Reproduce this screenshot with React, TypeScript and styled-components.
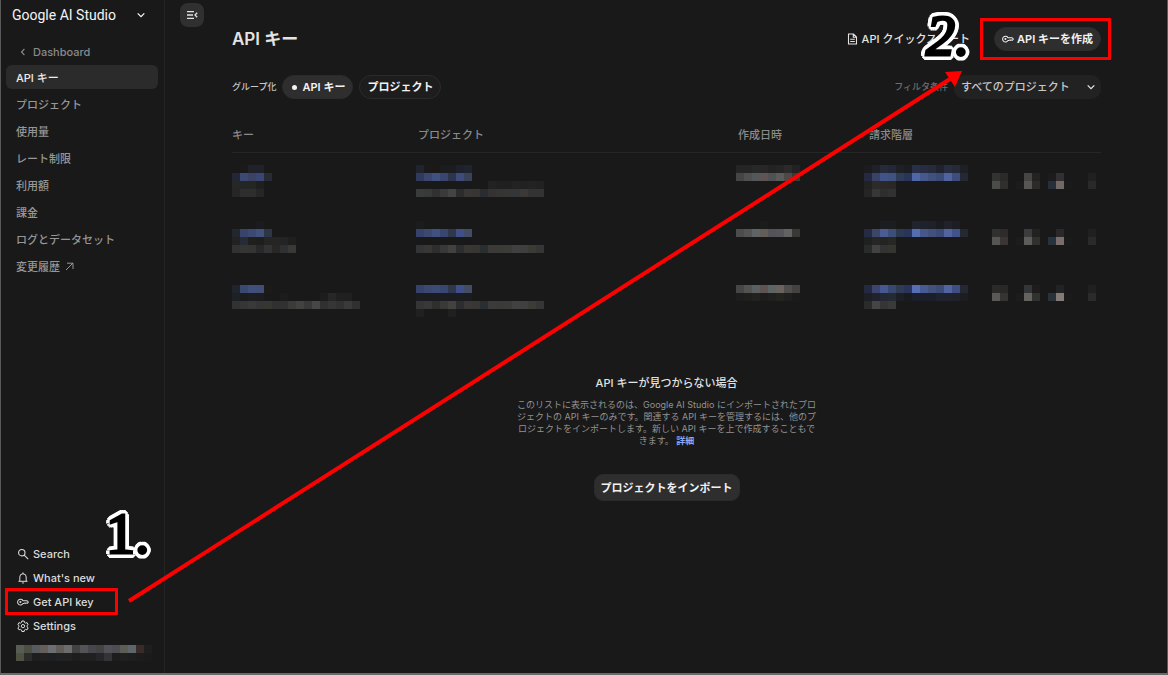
import React from "react";
import styled, { createGlobalStyle } from "styled-components";

const Global = createGlobalStyle`
  * { box-sizing: border-box; }
  body { margin: 0; background: #191919; }
  button, select { font: inherit; color: inherit; }
  a { color: inherit; text-decoration: none; }
`;

const Page = styled.div`
  position: relative;
  display: flex;
  min-height: 100vh;
  background: #191919;
  color: #e3e3e3;
  border-left: 1px solid #5a5a5a;
  border-right: 1px solid #5a5a5a;
  border-bottom: 2px solid #6a6a6a;
  font: 500 11px/16px Inter, "Noto Sans CJK JP", sans-serif;
`;

const Sidebar = styled.aside`
  display: flex;
  flex-direction: column;
  flex: none;
  width: 164px;
  padding: 4px 6px 8px 5px;
  border-right: 1px solid #242424;
`;

const Brand = styled.button`
  display: flex;
  align-items: center;
  justify-content: space-between;
  height: 22px;
  padding: 0 12px 0 6px;
  border: 0;
  background: none;
  color: #f4f4f4;
  font: 400 14px/22px Roboto, sans-serif;
`;

const Back = styled.a`
  display: flex;
  align-items: center;
  gap: 5px;
  height: 24px;
  margin-top: 14px;
  padding-left: 12px;
  color: #8a8a8a;
`;

const NavList = styled.nav`
  display: flex;
  flex-direction: column;
  gap: 3px;
  margin-top: 1px;
`;

const NavItem = styled.a<{ $active?: boolean }>`
  display: flex;
  align-items: center;
  gap: 5px;
  height: 24px;
  padding: 1px 10px 0;
  border-radius: 6px;
  color: ${(p) => (p.$active ? "#ececec" : "#969696")};
  background: ${(p) => (p.$active ? "#2b2b2b" : "transparent")};
`;

const Footer = styled.nav`
  display: flex;
  flex-direction: column;
  margin-top: auto;
`;

const FooterItem = styled.a<{ $marked?: boolean }>`
  position: relative;
  display: flex;
  align-items: center;
  gap: 4px;
  height: 24px;
  padding-left: 11px;
  color: #dcdcdc;
  &::after {
    content: "";
    display: ${(p) => (p.$marked ? "block" : "none")};
    position: absolute;
    inset: -2px 40px -1px -1px;
    border: 3px solid #ff0000;
  }
`;

const Account = styled.div`
  margin: 7px 0 0 10px;
`;

const Main = styled.main`
  display: flex;
  flex: 1;
  min-width: 0;
  padding-right: 66px;
`;

const Rail = styled.div`
  flex: none;
  width: 67px;
  padding: 3px 0 0 15px;
`;

const MenuButton = styled.button`
  display: grid;
  place-items: center;
  width: 24px;
  height: 24px;
  padding: 0;
  border: 0;
  border-radius: 8px;
  background: #303030;
`;

const Content = styled.div`
  flex: 1;
  min-width: 0;
  padding-top: 27px;
`;

const Bar = styled.div`
  display: flex;
  align-items: center;
  justify-content: space-between;
  height: 24px;
  margin-bottom: 24px;
`;

const Group = styled.div<{ $gap: number }>`
  display: flex;
  align-items: center;
  gap: ${(p) => p.$gap}px;
`;

const Title = styled.h1`
  margin: 0;
  font-size: 17px;
  line-height: 24px;
  font-weight: 600;
`;

const QuickStart = styled.a`
  display: flex;
  align-items: center;
  gap: 4px;
`;

const Marked = styled.div`
  position: relative;
  &::after {
    content: "";
    position: absolute;
    inset: -9px -10px -9px -14px;
    border: 3px solid #ff0000;
    pointer-events: none;
  }
`;

const Button = styled.button<{ $tone?: "solid" | "outline" }>`
  display: flex;
  align-items: center;
  gap: 3px;
  height: 24px;
  padding: 0 7px;
  border: 1px solid #2b2b2b;
  border-radius: 12px;
  background: ${(p) => (p.$tone === "outline" ? "#1d1d1d" : "#2e2e2e")};
  color: #f2f2f2;
  font-weight: 600;
`;

const ImportButton = styled(Button)`
  height: 27px;
  margin: 27px auto 0;
  padding: 0 6px;
  border-radius: 9px;
`;

const Dot = styled.span`
  width: 5px;
  height: 5px;
  margin: 0 2px;
  border-radius: 50%;
  background: #f2f2f2;
`;

const Small = styled.span<{ $dim?: boolean }>`
  font-size: 9px;
  color: ${(p) => (p.$dim ? "#6e6e6e" : "#c6c6c6")};
`;

const SelectBox = styled.div`
  position: relative;
  display: flex;
  align-items: center;
  svg {
    position: absolute;
    right: 5px;
    pointer-events: none;
  }
`;

const Select = styled.select`
  appearance: none;
  width: 147px;
  height: 24px;
  padding: 0 20px 0 7px;
  border: 0;
  border-radius: 10px;
  background: #222222;
  color: #c8c8c8;
`;

const Table = styled.table`
  width: 100%;
  table-layout: fixed;
  border-collapse: separate;
  border-spacing: 0;
`;

const Th = styled.th<{ $width?: number; $indent?: number }>`
  width: ${(p) => (p.$width ? `${p.$width}px` : "auto")};
  height: 30px;
  padding: 0 0 5px ${(p) => p.$indent ?? 0}px;
  border-bottom: 1px solid #262626;
  color: #8a8a8a;
  font-weight: 500;
  text-align: left;
`;

const Td = styled.td`
  height: 56px;
  padding: 12px 0 0;
  vertical-align: top;
  line-height: 0;
`;

const Empty = styled.section`
  width: 304px;
  margin: 0 auto;
  padding-top: 54px;
  text-align: center;
`;

const EmptyTitle = styled.h2`
  margin: 0;
  font-size: 11px;
  line-height: 16px;
  font-weight: 500;
`;

const EmptyText = styled.p`
  margin: 8px 0 0;
  color: #929292;
  font-size: 9px;
  line-height: 12px;
  font-weight: 400;
  a { color: #87a9ff; font-weight: 700; }
`;

const Arrow = styled.svg`
  position: absolute;
  top: 0;
  left: -1px;
  pointer-events: none;
`;

const Step = styled.span<{ $x: number; $y: number; $italic?: boolean }>`
  position: absolute;
  left: ${(p) => p.$x}px;
  top: ${(p) => p.$y}px;
  color: #000;
  font: ${(p) => (p.$italic ? "italic" : "normal")} 400 58px/60px "Liberation Serif", serif;
  -webkit-text-stroke: 3px #000;
  stroke-linejoin: round;
  text-shadow:
    5px 0 #fff, -5px 0 #fff, 0 5px #fff, 0 -5px #fff,
    4px 3px #fff, -4px 3px #fff, 4px -3px #fff, -4px -3px #fff,
    3px 4px #fff, -3px 4px #fff, 3px -4px #fff, -3px -4px #fff,
    5px 1px #fff, -5px 1px #fff, 5px -1px #fff, -5px -1px #fff,
    2px 5px #fff, -2px 5px #fff, 2px -5px #fff, -2px -5px #fff,
    3px 0 #fff, -3px 0 #fff, 0 3px #fff, 0 -3px #fff;
  pointer-events: none;
`;

function Mosaic({ rows }: { rows: string[] }) {
  const cells = rows.map((r) => r.split(" "));
  const cols = Math.max(...cells.map((r) => r.length));
  return (
    <svg width={cols * 8} height={cells.length * 8} shapeRendering="crispEdges" aria-hidden="true">
      {cells.map((r, y) =>
        r.map((c, x) => (c === "-" ? null : <rect key={`${x}-${y}`} x={x * 8} y={y * 8} width="8" height="8" fill={`#${c}`} />))
      )}
    </svg>
  );
}

const KeyIcon = () => (
  <svg width="12" height="12" viewBox="0 0 13 12" fill="none" stroke="currentColor" strokeWidth="1.1" strokeLinejoin="round">
    <path d="M6.5 4.700H11l1.400 1.300L11 7.500l-.9-.5-.8.5-.8-.5-.7.5H6.500A3.100 3.100 0 1 1 6.500 4.700Z" />
    <circle cx="3.700" cy="6" r="1.100" fill="currentColor" stroke="none" />
  </svg>
);
const Chevron = () => (
  <svg width="10" height="10" viewBox="0 0 10 10" fill="none" stroke="currentColor" strokeWidth="1.3">
    <path d="m1.7 3.4 3.3 3.2 3.3-3.2" />
  </svg>
);
const BackIcon = () => (
  <svg width="10" height="10" viewBox="0 0 10 10" fill="none" stroke="currentColor" strokeWidth="1.1">
    <path d="M6.4 2 3.5 5l2.9 3" />
  </svg>
);
const OutIcon = () => (
  <svg width="9" height="9" viewBox="0 0 9 9" fill="none" stroke="currentColor">
    <path d="M1 8 8 1M2 1.2h6V7" />
  </svg>
);
const MenuIcon = () => (
  <svg width="12" height="10" viewBox="0 0 12 10" fill="none" stroke="currentColor" strokeWidth="1.3">
    <path d="M1 1.700h7M1 5h6M1 8.300h7M11.200 2.800 9 5l2.200 2.200" />
  </svg>
);
const DocIcon = () => (
  <svg width="11" height="12" viewBox="0 0 11 12" fill="none" stroke="currentColor" strokeWidth="1.1">
    <path d="M1.5 1h5L9.5 4v7h-8ZM6.3 1v3.2h3M3.2 6.3h4.6M3.2 8.5h4.6" />
  </svg>
);
const SearchIcon = () => (
  <svg width="12" height="12" viewBox="0 0 12 12" fill="none" stroke="currentColor" strokeWidth="1.1">
    <circle cx="4.8" cy="4.7" r="3.2" />
    <path d="m7.2 7.1 4 4" />
  </svg>
);
const BellIcon = () => (
  <svg width="12" height="12" viewBox="0 0 12 12" fill="none" stroke="currentColor">
    <path d="M1.5 9.3h9M2.8 9.3V5a3.2 3.2 0 0 1 6.4 0v4.3M6 .4v1.5" />
    <path d="M4.9 10.5h2.2c0 .7-.5 1.1-1.1 1.1s-1.1-.4-1.1-1.1Z" fill="currentColor" stroke="none" />
  </svg>
);
const GearIcon = () => (
  <svg width="12" height="12" viewBox="0 0 24 24" fill="none" stroke="currentColor" strokeWidth="2">
    <path d="M9.7 2h4.6l.6 3 2.2 1.3 3-1 2.2 4-2.3 2v2.4l2.3 2-2.2 4-3-1-2.2 1.300-.6 3H9.700l-.6-3-2.200-1.300-3 1-2.200-4 2.300-2v-2.400l-2.300-2 2.200-4 3 1L9.100 5Z" />
    <circle cx="12" cy="12.300" r="3.300" />
  </svg>
);

const nav = ["プロジェクト", "使用量", "レート制限", "利用額", "課金", "ログとデータセット"];

const records = [
  [
    ["- 1a1a1a 1f222b 1f222b -", "232733 3c4974 3b4263 3a4673 282b34", "262826 242625 242624 1f1f1f -", "252726 2e2e2e 2e2e2e 272526 -"],
    [
      "20242e 1a1a1a 1b1916 1b1c1e 1b1c1e 1e212b 20242f",
      "303a5b 3b4770 40507f 39466f 2c354b 3e4b7b 3a425b",
      "- - - - - - - - - 222222 202020 202020 232323 212121 232323 212121",
      "393b3c 383a3a 303130 3a3a3a 444444 2a2c2d 383735 373633 292d31 343331 363533 363635 35363a 3b3936 353331 333333",
    ],
    ["252525 252525 272828 282727 232323 252525 2b292a 222222", "454545 52504f 54585b 5c5553 505152 5b5b5b 4c4947 353a3a"],
    [
      "1b1c20 1e2129 252b39 22283a 1e2026 1b1d22 283049 262d42 252b3c 20232f 272e43 242a38 1e2025",
      "242940 394267 425487 40527f 2f3b57 29345a 5066a8 46588d 40517f 3b4b78 50629f 3f4d7d 242834",
      "222222 2c2b29 292928 292826",
      "252525 373737 2e2e2e 323031",
    ],
    ["-", "323232 2c2a29 - - 454545 242321 - 1c1c1c 333031 - - - 202020", "4a4c4a 312e2e - 1a1c1e 585652 2c2b29 - 27303a 716965 1b1b1b - - 292a28"],
  ],
  [
    ["- - - 1a1c22 -", "22262d 3a4369 3c4972 43527d 2e3547", "222220 272b38 1f1f1e 1e1e1e 252523 262523 242424 1f1f1e", "323232 353534 353432 282828 323335 292725 2e3032 3b3936"],
    [
      "1a1c1d",
      "36426b 3c4870 40507f 39466f 2e374b 414f88 424c65",
      "-",
      "333435 383736 2e2e2c 383838 424140 2c2d2e 383735 373633 292e31 3c3a38 3c3a37 3b3b3a 404041 403f3f 3c3a35 363637",
    ],
    ["- - - 1b1d1b", "4c4c4d 545355 5e6366 645d57 545358 565559 626262 393834"],
    [
      "- - 1c1d20 1c1d20 - - 20242e 1f222d 1e212a 1b1c20 22222d 1d1e24",
      "252b43 3c4669 4b5b96 3d4e79 2d3851 29345c 546cb0 46578c 42517b 3b4a76 5263a0 42528a 242830",
      "1f2021 262626 242423 272725",
      "292a2a 424242 333333 353530",
    ],
    ["-", "303030 2e2b2b - - 3c3c3e 222220 - - 2a2828 - - - 202020", "565554 3b3634 - 1a1c1e 5d5c59 30302d - 28323a 7a6e6b 1b1b1b - - 2a2a28"],
  ],
  [
    ["-", "20242c 3b4870 404f7b 404e78 1c1b1a", "1d2025 1b1c1d 1d1e22 1c1d20 - - 1c1c1c - - - - 1c1d1c 272727 1f201f 1f201f", "323232 363636 393938 353535 373633 303030 313131 3b3b3a 434240 383838 464748 303030 363637 303130 3a3a3b 32302e"],
    [
      "-",
      "36426b 3c4870 3c4b76 39466f 2e374b 414f88 424c65",
      "1b1c20 1b1c20 1b1c20 1b1c20 1b1c20 1b1c20 1b1c20",
      "343536 383838 2f302e 393938 424241 2c2d2e 393836 383734 292e32 3d3b39 3c3a37 3b3b3a 414142 413f3f 3c3b38 363637",
      "202020 - - - 202020",
    ],
    ["-", "464646 545352 5b5f61 5c5552 5e6366 69625f 4f4e4b 434240", "1d1d1d 1f1f1e 222220 1d1d1d 20211f 232320 1f1f1f 1b1b1b"],
    [
      "-",
      "242940 3b456d 465892 394870 2f3b52 29345c 566eb5 475a92 42527f 3c4b78 5163a1 3f4e83 242832",
      "1d1f24 20232c 252834 262a33 1c1f25 191b1e 1c1f29 1c1f2b 1c1f29 20232e 20232e 20222a 1c1d20",
      "2b2b2b 454547 353537 3a3a3a",
    ],
    ["-", "2a2a2a 292727 - - 343538 1e1d1b - - 232323 - - - 202020", "5a5957 363432 - 1a1c1e 656360 30322f - 28323a 837b77 1b1b1b - - 2b2c29"],
  ],
];

export default function App() {
  return (
    <>
      <Global />
      <Page>
        <Sidebar>
          <Brand>Google AI Studio<Chevron /></Brand>
          <Back href="#"><BackIcon />Dashboard</Back>
          <NavList>
            <NavItem href="#" $active>API キー</NavItem>
            {nav.map((n) => <NavItem href="#" key={n}>{n}</NavItem>)}
            <NavItem href="#">変更履歴<OutIcon /></NavItem>
          </NavList>
          <Footer>
            <FooterItem href="#"><SearchIcon />Search</FooterItem>
            <FooterItem href="#"><BellIcon />What's new</FooterItem>
            <FooterItem href="#" $marked><KeyIcon />Get API key</FooterItem>
            <FooterItem href="#"><GearIcon />Settings</FooterItem>
            <Account>
              <Mosaic
                rows={[
                  "575c54 4d4f45 575b5f 655e5b 6c6e72 635d5a 6c6c6c 424244 545355 46474c 454244 535158 4e4d54 5c5e53 5e666b 382b28 1e1e1e",
                  "4f5142 2b2d2b 1e1e1e 1f2020 1d2020 1f2222 202222 1d1d1d 202020 202020 24262a 343335 1d1d1f 202020 1e1e1e 1c1c1c 1b1b1b",
                ]}
              />
            </Account>
          </Footer>
        </Sidebar>
        <Main>
          <Rail><MenuButton aria-label="メニュー"><MenuIcon /></MenuButton></Rail>
          <Content>
            <Bar>
              <Title>API キー</Title>
              <Group $gap={24}>
                <QuickStart href="#"><DocIcon />API クイックスタート</QuickStart>
                <Marked><Button><KeyIcon />API キーを作成</Button></Marked>
              </Group>
            </Bar>
            <Bar>
              <Group $gap={6}>
                <Small>グループ化</Small>
                <Button><Dot />API キー</Button>
                <Button $tone="outline">プロジェクト</Button>
              </Group>
              <Group $gap={6}>
                <Small as="label" htmlFor="filter" $dim>フィルタ条件</Small>
                <SelectBox>
                  <Select id="filter"><option>すべてのプロジェクト</option></Select>
                  <Chevron />
                </SelectBox>
              </Group>
            </Bar>
            <Table>
              <thead>
                <tr>
                  <Th $width={184}>キー</Th>
                  <Th $indent={2}>プロジェクト</Th>
                  <Th $width={128} $indent={2}>作成日時</Th>
                  <Th $width={128} $indent={5}>請求階層</Th>
                  <Th $width={109} aria-label="操作" />
                </tr>
              </thead>
              <tbody>
                {records.map((cells, i) => (
                  <tr key={i}>
                    {cells.map((rows, j) => (
                      <Td key={j}><Mosaic rows={rows} /></Td>
                    ))}
                  </tr>
                ))}
              </tbody>
            </Table>
            <Empty>
              <EmptyTitle>API キーが見つからない場合</EmptyTitle>
              <EmptyText>
                このリストに表示されるのは、Google AI Studio にインポートされたプロジェクトの API キーのみです。関連する API キーを管理するには、他のプロジェクトをインポートします。新しい API キーを上で作成することもできます。 <a href="#">詳細</a>
              </EmptyText>
              <ImportButton>プロジェクトをインポート</ImportButton>
            </Empty>
          </Content>
        </Main>
        <Arrow width="1168" height="673" viewBox="0 0 1168 673" aria-hidden="true">
          <path d="M129 601 950 79" stroke="#ff0000" strokeWidth="4" />
          <path d="M962 71 945 72 955 87Z" fill="#ff0000" />
        </Arrow>
        <Step $x={105} $y={504}>1.</Step>
        <Step $x={925} $y={6} $italic>2.</Step>
      </Page>
    </>
  );
}
